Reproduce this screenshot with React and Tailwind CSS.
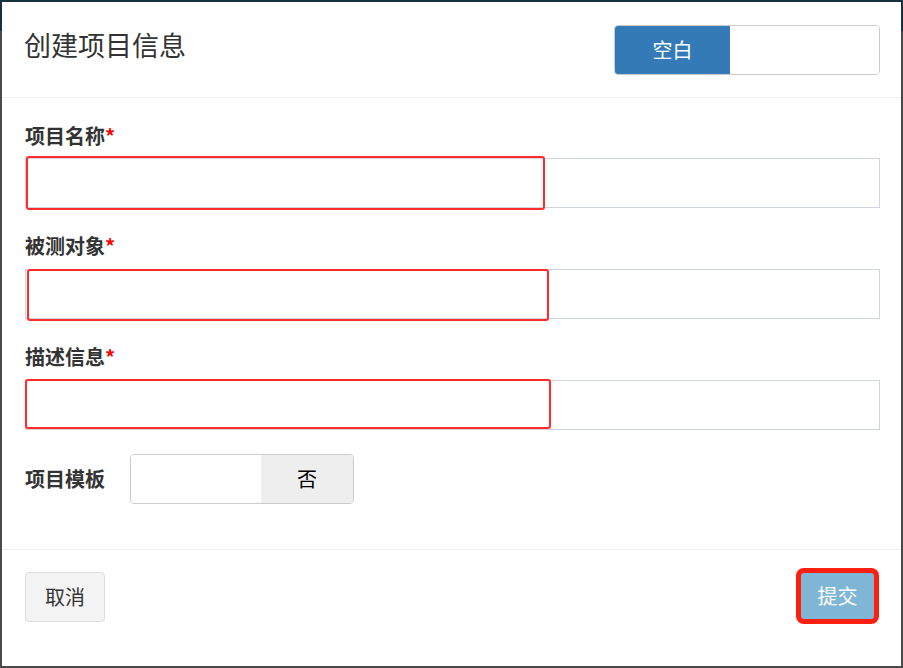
import { useState } from 'react';

const FONT = { fontFamily: '"Noto Sans CJK SC", "Noto Sans", sans-serif' };

// 红色标注框：只是叠在输入框上方的提示
const Field = ({ label, mark, labelClass }) => (
  <div>
    <div className={`flex h-[28px] items-center text-[20px] font-bold text-[#333] ${labelClass}`}>
      {label}
      <span className="text-[#ff0000]">*</span>
    </div>
    <div className="relative">
      <input className="block h-[50px] w-full border border-[#d0d4de] bg-white px-3 text-base outline-none" />
      <div className={`pointer-events-none absolute rounded-[3px] border-2 border-[#ff2b2b] ${mark}`} />
    </div>
  </div>
);

export default function App() {
  const [template, setTemplate] = useState(false);

  return (
    <div
      className="h-[668px] w-[903px] bg-[linear-gradient(to_bottom,#17323f_31px,#4a4a4a_31px)] pl-[2px] pt-[2px]"
      style={FONT}
    >
      <div className="flex h-[664px] w-[899px] flex-col bg-white">
        {/* 头部 */}
        <div className="flex h-[96px] shrink-0 items-start justify-between border-b border-[#eeeeee] pl-[22px] pr-[21px] pt-[23px]">
          <h4 className="mt-[3px] text-[27px] font-normal leading-[34px] text-[#333]">创建项目信息</h4>
          <div className="flex h-[50px] w-[266px] overflow-hidden rounded-[4px] border border-[#cccccc]">
            <div className="flex w-[115px] items-center justify-center bg-[#337ab7] text-[20px] text-white">空白</div>
            <div className="flex-1 bg-white" />
          </div>
        </div>

        {/* 表单 */}
        <div className="flex flex-col gap-[24px] border-b border-[#eeeeee] pb-[45px] pl-[23px] pr-[21px] pt-[24px]">
          <Field label="项目名称" labelClass="mb-[8px]" mark="left-[1px] -top-[2px] h-[54px] w-[519px]" />
          <Field label="被测对象" labelClass="mb-[9px]" mark="left-[2px] top-0 h-[52px] w-[522px]" />
          <Field label="描述信息" labelClass="mb-[9px]" mark="left-0 -top-[1px] h-[50px] w-[526px]" />
          <div className="flex items-center">
            <div className="w-[105px] text-[20px] font-bold text-[#333]">项目模板</div>
            <button
              onClick={() => setTemplate(!template)}
              className="flex h-[50px] w-[224px] overflow-hidden rounded-[4px] border border-[#cccccc]"
            >
              <span className={`h-full w-[130px] ${template ? 'bg-[#337ab7]' : 'bg-white'}`} />
              <span className="flex h-full flex-1 items-center justify-center bg-[#eeeeee] text-[20px] text-black">否</span>
            </button>
          </div>
        </div>

        {/* 底部 */}
        <div className="flex items-start justify-between pl-[23px] pr-[21px] pt-[22px]">
          <button className="h-[50px] w-[80px] rounded-[4px] border border-[#dddddd] bg-[#f3f3f3] text-[20px] text-[#333]">
            取消
          </button>
          <button className="mr-[6px] mt-[1px] h-[46px] w-[73px] rounded-[3px] bg-[#7fb6d6] text-[20px] text-white ring-[5px] ring-[#ff1f0f]">
            提交
          </button>
        </div>
      </div>
    </div>
  );
}
